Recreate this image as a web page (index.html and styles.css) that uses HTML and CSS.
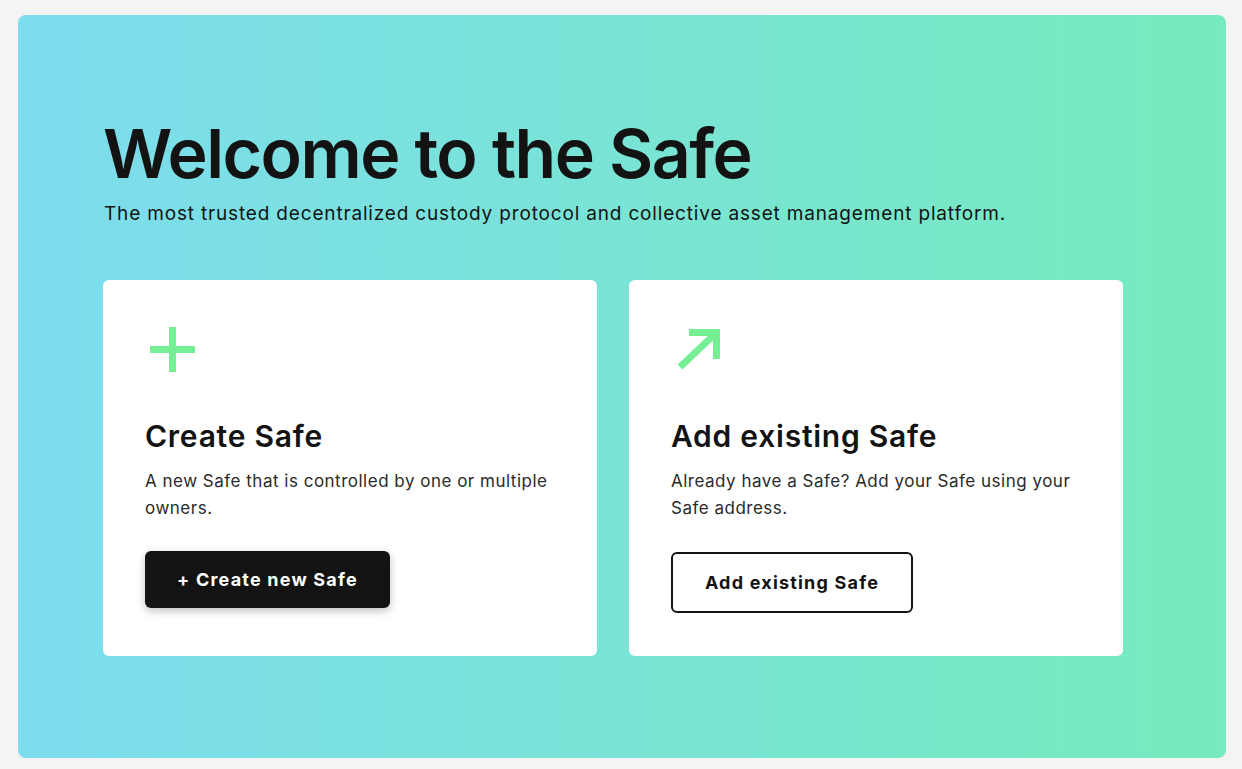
FILE: index.html
```html
<!DOCTYPE html>
<html lang="en">
<head>
<meta charset="utf-8">
<title>Welcome to the Safe</title>
<link rel="stylesheet" href="styles.css">
</head>
<body>
<main class="hero">
  <h1 class="hero-title">Welcome to the Safe</h1>
  <p class="hero-subtitle">The most trusted decentralized custody protocol and collective asset management platform.</p>
  <div class="cards">
    <section class="card">
      <svg class="card-icon" width="45" height="45" viewBox="0 0 45 45" aria-hidden="true">
        <path d="M22.5 0V45M0 22.5H45" stroke="#76ef94" stroke-width="7" fill="none"/>
      </svg>
      <h2 class="card-title">Create Safe</h2>
      <p class="card-text">A new Safe that is controlled by one or multiple owners.</p>
      <button class="btn btn-primary">+ Create new Safe</button>
    </section>
    <section class="card">
      <svg class="card-icon" width="45" height="45" viewBox="0 0 45 45" aria-hidden="true">
        <path d="M40.5 5.5L4 40" stroke="#76ef94" stroke-width="7" fill="none"/>
        <path d="M13 5.5H40.5V32" stroke="#76ef94" stroke-width="7" fill="none" stroke-linejoin="miter"/>
      </svg>
      <h2 class="card-title">Add existing Safe</h2>
      <p class="card-text">Already have a Safe? Add your Safe using your Safe address.</p>
      <button class="btn btn-outline">Add existing Safe</button>
    </section>
  </div>
</main>
</body>
</html>
```

FILE: styles.css
```css
* { box-sizing: border-box; }
html, body { margin: 0; padding: 0; }
body {
  background: #f4f4f4;
  font-family: Inter, "Noto Sans", sans-serif;
  color: #121312;
}
.hero {
  margin: 15px 16px 11px 18px;
  height: 743px;
  border-radius: 8px;
  background: linear-gradient(90deg, #7ddcee 0%, #76ebbd 100%);
  padding: 100px 0 0 85px;
}
.hero-title {
  margin: 0;
  font-size: 68px;
  line-height: 76px;
  font-weight: 600;
  letter-spacing: -1.5px;
}
.hero-subtitle {
  margin: 11px 0 0 1px;
  font-size: 19px;
  line-height: 24px;
  font-weight: 400;
  letter-spacing: 0.83px;
}
.cards {
  display: flex;
  gap: 32px;
  margin-top: 54px;
}
.card {
  width: 494px;
  height: 376px;
  background: #fff;
  border-radius: 6px;
  padding: 47px 42px 0 42px;
  display: flex;
  flex-direction: column;
  align-items: flex-start;
}
.card-icon { display: block; margin-left: 5px; }
.card-title {
  margin: 46px 0 0 0;
  font-size: 30px;
  line-height: 36px;
  font-weight: 600;
  letter-spacing: 0.75px;
}
.card-text {
  margin: 14px 0 0 0;
  font-size: 17px;
  line-height: 27px;
  font-weight: 400;
  letter-spacing: 0.5px;
  color: #2a2b2a;
}
.btn {
  font-family: inherit;
  font-size: 18px;
  font-weight: 700;
  letter-spacing: 1.2px;
  border-radius: 6px;
  cursor: pointer;
}
.btn-primary {
  margin-top: 29px;
  width: 245px;
  height: 57px;
  background: #121312;
  color: #fff;
  border: none;
  box-shadow: 0 3px 8px rgba(0,0,0,0.25);
}
.btn-outline {
  margin-top: 30px;
  width: 242px;
  height: 61px;
  background: #fff;
  color: #121312;
  border: 2px solid #121312;
}
```
